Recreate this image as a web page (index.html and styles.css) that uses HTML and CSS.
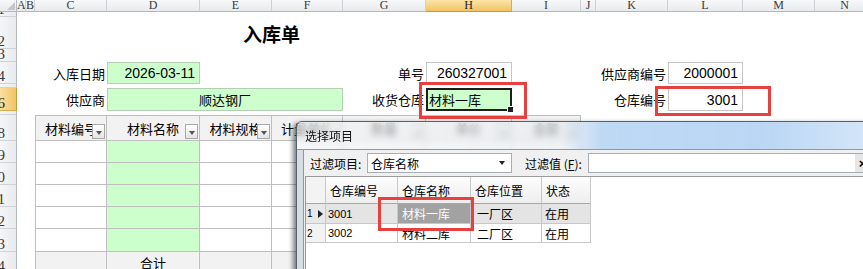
FILE: index.html
```html
<!DOCTYPE html>
<html lang="zh-CN">
<head>
<meta charset="utf-8">
<title>入库单</title>
<link rel="stylesheet" href="styles.css">
</head>
<body>
<div class="sheet">
  <div class="corner"><span class="tri"></span></div>
  <div class="ch">A</div>
  <div class="ch">B</div>
  <div class="ch">C</div>
  <div class="ch">D</div>
  <div class="ch">E</div>
  <div class="ch">F</div>
  <div class="ch">G</div>
  <div class="ch sel">H</div>
  <div class="ch">I</div>
  <div class="ch">J</div>
  <div class="ch">K</div>
  <div class="ch">L</div>
  <div class="ch">M</div>
  <div class="ch">N</div>

  <div class="rh">1</div>
  <div class="rh">2</div>
  <div class="rh">3</div>
  <div class="rh">4</div>
  <div class="rh"></div>
  <div class="rh sel">6</div>
  <div class="rh"></div>
  <div class="rh">8</div>
  <div class="rh">9</div>
  <div class="rh">10</div>
  <div class="rh">11</div>
  <div class="rh">12</div>
  <div class="rh">13</div>
  <div class="rh">14</div>

  <div class="title">入库单</div>

  <div class="lbl xC y4">入库日期</div>
  <div class="fld g r xD y4">2026-03-11</div>
  <div class="lbl xG y4">单号</div>
  <div class="fld r xH y4">260327001</div>
  <div class="lbl xK y4">供应商编号</div>
  <div class="fld r xL y4">2000001</div>

  <div class="lbl xC y6">供应商</div>
  <div class="fld g c xDF y6">顺达钢厂</div>
  <div class="lbl xG y6">收货仓库</div>
  <div class="fld g active xH y6">材料一库<span class="handle"></span></div>
  <div class="lbl xK y6">仓库编号</div>
  <div class="fld r xL y6">3001</div>

  <div class="tbl">
    <div class="tc th">材料编号<span class="fb"></span></div>
    <div class="tc th">材料名称<span class="fb"></span></div>
    <div class="tc th">材料规格<span class="fb"></span></div>
    <div class="tc th">计量单位<span class="fb"></span></div>
    <div class="tc th">数量<span class="fb"></span></div>
    <div class="tc th">单价<span class="fb"></span></div>
    <div class="tc th">金额<span class="fb"></span></div>

    <div class="tc"></div><div class="tc gr"></div><div class="tc"></div><div class="tc"></div><div class="tc"></div><div class="tc"></div><div class="tc"></div>
    <div class="tc"></div><div class="tc gr"></div><div class="tc"></div><div class="tc"></div><div class="tc"></div><div class="tc"></div><div class="tc"></div>
    <div class="tc"></div><div class="tc gr"></div><div class="tc"></div><div class="tc"></div><div class="tc"></div><div class="tc"></div><div class="tc"></div>
    <div class="tc"></div><div class="tc gr"></div><div class="tc"></div><div class="tc"></div><div class="tc"></div><div class="tc"></div><div class="tc"></div>
    <div class="tc"></div><div class="tc gr"></div><div class="tc"></div><div class="tc"></div><div class="tc"></div><div class="tc"></div><div class="tc"></div>

    <div class="tc tf"></div><div class="tc tf">合计</div><div class="tc tf"></div><div class="tc tf"></div><div class="tc tf"></div><div class="tc tf"></div><div class="tc tf"></div>
  </div>
</div>

<div class="dialog">
  <div class="titlebar">选择项目</div>
  <div class="dbody">
    <div class="client">
      <div class="filter">
        <span class="flbl">过滤项目:</span>
        <div class="combo"><span>仓库名称</span><span class="carrow"></span></div>
        <span class="flbl2">过滤值 (<u>F</u>):</span>
        <div class="finput"><span class="fclear">×</span></div>
      </div>
      <div class="dgrid">
        <div class="gh gi"></div>
        <div class="gh">仓库编号</div>
        <div class="gh">仓库名称</div>
        <div class="gh">仓库位置</div>
        <div class="gh">状态</div>

        <div class="gc gi cur"><span class="rn">1</span><span class="ptr"></span></div>
        <div class="gc cur num">3001</div>
        <div class="gc cur hl">材料一库</div>
        <div class="gc cur loc">一厂区</div>
        <div class="gc cur">在用</div>

        <div class="gc gi"><span class="rn">2</span></div>
        <div class="gc num">3002</div>
        <div class="gc nm">材料二库</div>
        <div class="gc loc">二厂区</div>
        <div class="gc">在用</div>
      </div>
    </div>
  </div>
</div>

<div class="mark m1"></div>
<div class="mark m2"></div>
<div class="mark m3"></div>
</body>
</html>
```

FILE: styles.css
```css
* { box-sizing: border-box; margin: 0; padding: 0; }

html, body {
  width: 863px;
  height: 269px;
  overflow: hidden;
  background: #fff;
}

body {
  font-family: "Liberation Sans", "Noto Sans CJK SC", sans-serif;
  color: #000;
}

.sheet {
  display: grid;
  grid-template-columns: 17px 9px 9px 72px 93px 72px 71px 83px 86px 69px 15px 72px 75px 72px 60px;
  grid-template-rows: 12px 5px 32px 13px 22px 4px 23px 4px 26px 22px 22px 22px 22px 23px 22px;
  width: 875px;
}

/* headers */
.corner {
  background: linear-gradient(#f7f8f9, #e8eaed);
  border-right: 1px solid #b3b8bf;
  border-bottom: 1px solid #b3b8bf;
  position: relative;
}
.tri {
  position: absolute;
  right: 1px;
  bottom: 1px;
  width: 0;
  height: 0;
  border-left: 8px solid transparent;
  border-bottom: 8px solid #c3c6ca;
}

.ch {
  background: linear-gradient(#f7f8f9, #e8eaed);
  border-right: 1px solid #cdd0d4;
  border-bottom: 1px solid #b3b8bf;
  font: 12px/11px "Liberation Serif", serif;
  color: #3a3a3a;
  text-align: center;
  overflow: hidden;
}
.ch.sel {
  background: linear-gradient(#fbe4a8, #f2c464);
  border-right-color: #d6ab52;
  border-bottom-color: #c8993e;
  color: #222;
}

.rh {
  grid-column: 1;
  display: flex;
  justify-content: flex-end;
  align-items: flex-end;
  padding-right: 11px;
  background: linear-gradient(90deg, #f5f6f7, #e8eaed);
  border-right: 1px solid #b3b8bf;
  border-bottom: 1px solid #cfd2d6;
  font: 15px/13px "Liberation Serif", serif;
  color: #3a3a3a;
  overflow: hidden;
  white-space: nowrap;
}
.rh.sel {
  background: linear-gradient(90deg, #fbe0a0, #f2c464);
  border-right-color: #c8993e;
  border-bottom-color: #d6ab52;
  color: #222;
}

/* placement */
.xC { grid-column: 4; }
.xD { grid-column: 5; }
.xDF { grid-column: 5 / 8; }
.xG { grid-column: 8; }
.xH { grid-column: 9; }
.xK { grid-column: 12; }
.xL { grid-column: 13; }
.y4 { grid-row: 5; }
.y6 { grid-row: 7; }

.title {
  grid-column: 6 / 8;
  grid-row: 3;
  display: flex;
  align-items: center;
  justify-content: center;
  font: bold 19px "Noto Sans CJK SC", sans-serif;
  white-space: nowrap;
}

.lbl {
  display: flex;
  align-items: center;
  justify-content: flex-end;
  padding-right: 2px;
  font-size: 13px;
  white-space: nowrap;
}

.fld {
  display: flex;
  align-items: center;
  border: 1px solid #c6c6c6;
  background: #fff;
  font-size: 14px;
  padding: 0 4px;
  white-space: nowrap;
}
.fld.g { background: #ccffcc; border-color: #b5cfb5; }
.fld.r { justify-content: flex-end; }
.fld.c { justify-content: center; font-size: 13px; }
.fld.active {
  border: 2px solid #1e1e1e;
  padding-left: 1px;
  font-size: 13px;
  position: relative;
}
.handle {
  position: absolute;
  right: -4px;
  bottom: -4px;
  width: 7px;
  height: 7px;
  background: #1e1e1e;
  border: 1px solid #fff;
}

/* material table */
.tbl {
  grid-column: 4 / 11;
  grid-row: 9 / 16;
  display: grid;
  grid-template-columns: 71px 93px 72px 71px 83px 86px 69px;
  grid-template-rows: 25px 22px 22px 22px 22px 23px 22px;
  border-left: 1px solid #bfbfbf;
  border-top: 1px solid #bfbfbf;
}
.tc {
  border-right: 1px solid #bfbfbf;
  border-bottom: 1px solid #bfbfbf;
  background: #fff;
}
.tc.gr { background: #ccffcc; }
.th, .tf {
  background: #f2f2f2;
  display: flex;
  align-items: center;
  justify-content: center;
  font-size: 13px;
  white-space: nowrap;
  overflow: hidden;
  position: relative;
}
.fb {
  position: absolute;
  right: 1px;
  bottom: 1px;
  width: 13px;
  height: 15px;
  border: 1px solid #a9a9a9;
  background: linear-gradient(#ffffff, #e4e4e4);
  display: flex;
  align-items: center;
  justify-content: center;
  padding-top: 3px;
}
.fb::after {
  content: "";
  border-top: 4px solid #555;
  border-left: 3.5px solid transparent;
  border-right: 3.5px solid transparent;
}

/* dialog */
.dialog {
  position: absolute;
  left: 296px;
  top: 121px;
  width: 600px;
  height: 170px;
  border: 1px solid #56616d;
  border-radius: 6px 0 0 0;
  box-shadow: -3px 2px 5px rgba(0, 0, 0, 0.5);
  display: flex;
  flex-direction: column;
  overflow: hidden;
}
.titlebar {
  height: 28px;
  flex: none;
  padding-left: 8px;
  display: flex;
  align-items: center;
  font: 12px "Noto Sans CJK SC", sans-serif;
  color: #111;
  background: linear-gradient(90deg,
    rgba(240, 242, 244, 0.62) 0%,
    rgba(232, 236, 240, 0.66) 44%,
    rgba(184, 213, 243, 0.9) 51%,
    rgba(180, 211, 243, 0.92) 78%,
    rgba(208, 227, 248, 0.95) 94%,
    rgba(215, 231, 249, 0.95) 100%);
  backdrop-filter: blur(3px);
  border-bottom: 1px solid #8d9aa8;
}
.dbody {
  flex: 1;
  background: #d8dde3;
  padding-left: 6px;
  display: flex;
}
.client {
  flex: 1;
  background: #f0f0f0;
  border-left: 1px solid #8d98a4;
  padding-top: 3px;
  display: flex;
  flex-direction: column;
}
.filter {
  display: flex;
  align-items: center;
  height: 20px;
  padding-left: 6px;
  font: 12px "Noto Sans CJK SC", sans-serif;
  white-space: nowrap;
  flex: none;
}
.filter > * { flex: none; }
.flbl { width: 57px; }
.combo {
  width: 145px;
  height: 20px;
  border: 1px solid #a7aeb7;
  background: #fff;
  display: flex;
  align-items: center;
  justify-content: space-between;
  padding: 0 6px 0 3px;
}
.carrow {
  border-top: 4px solid #222;
  border-left: 3.5px solid transparent;
  border-right: 3.5px solid transparent;
}
.flbl2 { margin-left: 13px; width: 63px; }
.finput {
  width: 283px;
  height: 20px;
  border: 1px solid #a7aeb7;
  background: #fff;
  display: flex;
  justify-content: flex-end;
}
.fclear {
  width: 15px;
  background: #e6e6e6;
  font: bold 13px "Liberation Sans", sans-serif;
  display: flex;
  align-items: center;
  justify-content: center;
}

.dgrid {
  flex: 1;
  margin-top: 3px;
  margin-left: 1px;
  display: grid;
  grid-template-columns: 20px 72px 73px 71px 49px;
  grid-template-rows: 27px 20px 19px;
  align-content: start;
  background: #fff;
  border-top: 1px solid #9a9a9a;
  border-left: 1px solid #9a9a9a;
  font: 12px "Noto Sans CJK SC", sans-serif;
}
.gh {
  background: linear-gradient(#fdfdfd, #eeeeee);
  border-right: 1px solid #c8c8c8;
  border-bottom: 1px solid #a8a8a8;
  display: flex;
  align-items: center;
  padding-left: 4px;
  white-space: nowrap;
}
.gc {
  border-right: 1px solid #c8c8c8;
  border-bottom: 1px solid #c8c8c8;
  display: flex;
  align-items: center;
  padding-left: 3px;
  white-space: nowrap;
  overflow: hidden;
}
.gc.cur { background: #e4e4e4; }
.gc.num { font: 11px "Liberation Sans", sans-serif; padding-left: 2px; }
.gc.hl { background: #a2a2a2; color: #fff; padding-left: 4px; }
.gc.nm { padding-left: 4px; }
.gc.loc { padding-left: 6px; }
.gi {
  padding-left: 1px;
  gap: 5px;
  background: #f3f3f3;
}
.gc.gi.cur { background: #e8e8e8; }
.rn { font: 10px "Liberation Sans", sans-serif; }
.ptr {
  width: 0;
  height: 0;
  border-left: 5px solid #222;
  border-top: 4px solid transparent;
  border-bottom: 4px solid transparent;
}

/* red annotation boxes */
.mark {
  position: absolute;
  border: 3px solid #e8403f;
}
.m1 { left: 419px; top: 82px; width: 108px; height: 37px; }
.m2 { left: 655px; top: 86px; width: 116px; height: 30px; }
.m3 { left: 378px; top: 197px; width: 96px; height: 34px; }
```
